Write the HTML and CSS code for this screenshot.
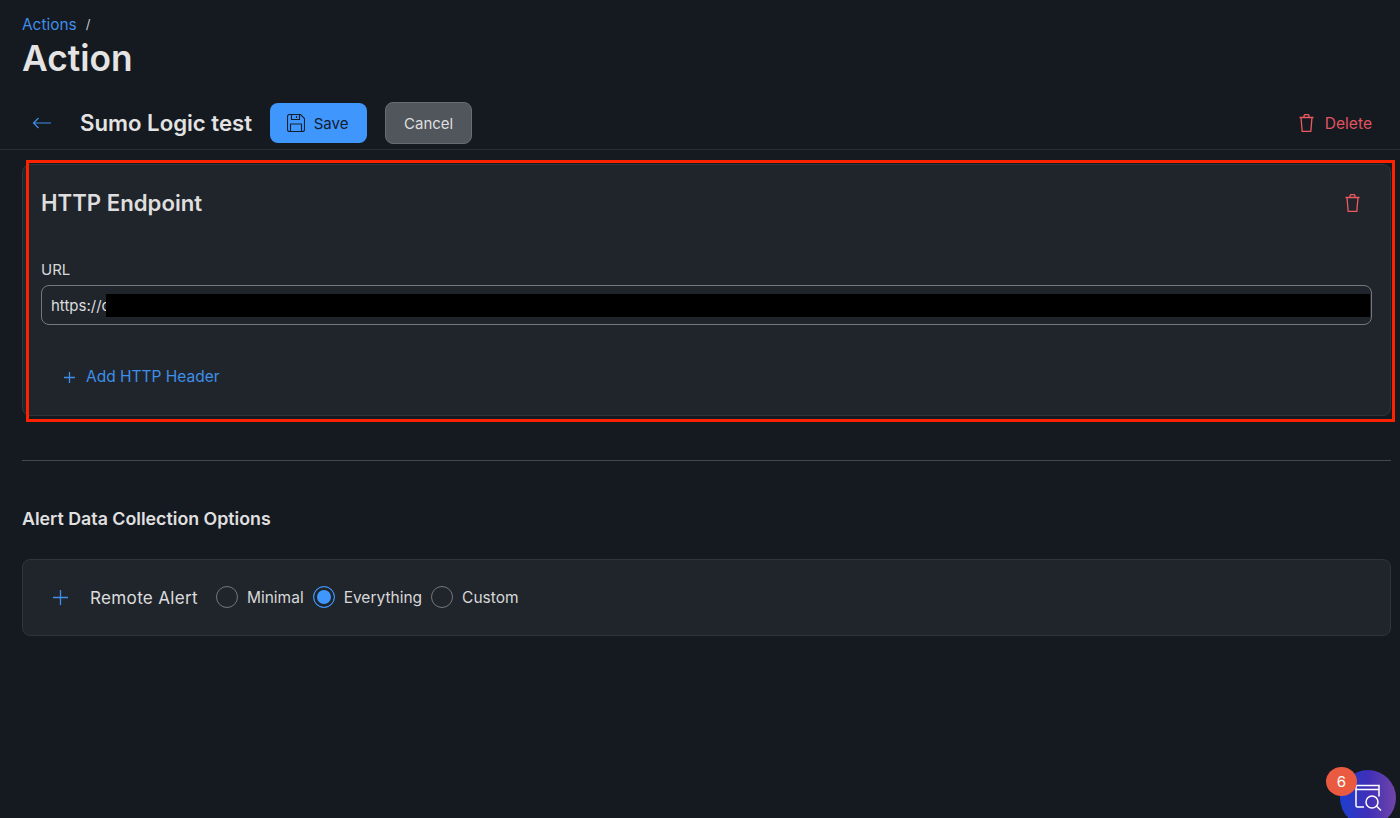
FILE: index.html
```html
<!DOCTYPE html>
<html lang="en">
<head>
<meta charset="utf-8">
<title>Action</title>
<link rel="stylesheet" href="styles.css">
</head>
<body>
<header class="page-head">
  <nav class="crumbs"><a class="crumb-link">Actions</a><span class="crumb-sep">/</span></nav>
  <h1 class="page-title">Action</h1>
</header>
<div class="toolbar">
  <svg class="back" width="20" height="12" viewBox="0 0 20 12" fill="none" stroke="currentColor" stroke-width="1.2"><path d="M19 6H1.500M6.500 1 1.500 6l5 5"/></svg>
  <h2 class="record-name">Sumo Logic test</h2>
  <button class="btn btn-save">
    <svg width="18" height="18" viewBox="0 0 18 18" fill="none" stroke="currentColor" stroke-width="1.100"><path d="M.5 2.500a2 2 0 0 1 2-2h11l4 4v11a2 2 0 0 1-2 2h-13a2 2 0 0 1-2-2z"/><path d="M4.500 .5v5h8v-5M9.500 2v2M3.500 17.500v-7.500h11v7.500"/></svg>
    Save
  </button>
  <button class="btn btn-cancel">Cancel</button>
  <button class="btn-delete">
    <svg class="trash" width="15" height="18" viewBox="0 0 15 18" fill="none" stroke="currentColor" stroke-width="1.300"><path d="M.5 3.500h14M2 3.500l1.200 14h8.600l1.200-14M5 3.500V2a1.500 1.500 0 0 1 1.500-1.500h2A1.500 1.500 0 0 1 10 2v1.500"/></svg>
    Delete
  </button>
</div>
<main class="content">
  <section class="card endpoint">
    <div class="card-head">
      <h3 class="card-title">HTTP Endpoint</h3>
      <svg class="trash" width="15" height="18" viewBox="0 0 15 18" fill="none" stroke="currentColor" stroke-width="1.300"><path d="M.5 3.500h14M2 3.500l1.200 14h8.600l1.200-14M5 3.500V2a1.500 1.500 0 0 1 1.500-1.500h2A1.500 1.500 0 0 1 10 2v1.500"/></svg>
    </div>
    <label class="field-label">URL</label>
    <div class="input"><span class="input-text">https://c</span><span class="redaction"></span></div>
    <a class="add-header">
      <svg width="11" height="11" viewBox="0 0 11 11" fill="none" stroke="currentColor" stroke-width="1.300"><path d="M5.500 0v11M0 5.500h11"/></svg>
      Add HTTP Header
    </a>
  </section>
  <hr class="divider">
  <h3 class="section-title">Alert Data Collection Options</h3>
  <section class="card alert-row">
    <svg class="plus" width="15" height="15" viewBox="0 0 15 15" fill="none" stroke="currentColor" stroke-width="1.300"><path d="M7.500 0v15M0 7.500h15"/></svg>
    <span class="alert-name">Remote Alert</span>
    <span class="radio"></span><span class="radio-label">Minimal</span>
    <span class="radio checked"></span><span class="radio-label">Everything</span>
    <span class="radio"></span><span class="radio-label">Custom</span>
  </section>
</main>
<div class="annotation"></div>
<div class="fab">
  <svg width="28" height="28" viewBox="0 0 28 28" fill="none" stroke="#fff" stroke-width="1.500"><path d="M10 23H3.500A1.500 1.500 0 0 1 2 21.500V1.500h23v11M2 5.500h23"/><circle cx="18" cy="18" r="6"/><path d="m22.500 22 4.500 4.500"/></svg>
</div>
<div class="badge">6</div>
</body>
</html>
```
FILE: styles.css
```css
* { box-sizing: border-box; }
html, body { height: 100%; }
body {
  margin: 0;
  height: 818px;
  overflow: hidden;
  position: relative;
  background: #151920;
  color: #e3e3e3;
  font-family: Inter, "Liberation Sans", sans-serif;
}
.page-head { padding: 15px 22px 0; height: 102px; }
.crumbs { display: flex; gap: 9px; font-size: 15.400px; line-height: 19px; }
.crumb-link { color: #3e8fe8; }
.crumb-sep { color: #c9c9c9; font-size: 13px; }
.page-title { margin: 4px 0 0; font-size: 35.300px; line-height: 42px; font-weight: 600; color: #e4e4e4; }
.toolbar {
  display: flex;
  align-items: center;
  height: 48px;
  padding: 0 28px 5px 32px;
  border-bottom: 1px solid #2a2e35;
}
.back { color: #3e8fe8; }
.record-name { margin: 0 18px 0 28px; padding-bottom: 2px; font-size: 22.200px; font-weight: 600; color: #e3e3e3; white-space: nowrap; }
.btn {
  display: flex;
  align-items: center;
  justify-content: center;
  font: 400 15px Inter, "Liberation Sans", sans-serif;
  border-radius: 8px;
}
.btn-save { width: 97px; height: 40px; gap: 9px; padding: 0 2px 0 0; background: #3f97fd; color: #14202e; border: 0; }
.btn-cancel { width: 87px; height: 42px; margin-left: 18px; padding: 0; background: #51555c; color: #dfdfdf; border: 1px solid #696d73; }
.btn-delete {
  margin-left: auto;
  display: flex;
  align-items: center;
  gap: 11px;
  padding: 0;
  background: none;
  border: 0;
  color: #e0535f;
  font: 400 15.600px Inter, "Liberation Sans", sans-serif;
}
.trash { color: #ee5a62; }
.content { padding: 14px 9px 0 22px; }
.card { background: #20252c; border: 1px solid #30353c; border-radius: 8px; }
.endpoint { height: 252px; padding: 0 18px; }
.card-head { display: flex; justify-content: space-between; align-items: center; height: 76px; padding-right: 12px; }
.card-title { margin: 0; padding-bottom: 2px; font-size: 22.200px; font-weight: 600; color: #dedede; }
.field-label { display: block; margin-top: 19px; font-size: 15px; line-height: 20px; color: #d8d8d8; }
.input {
  display: flex;
  align-items: center;
  height: 40px;
  margin-top: 5px;
  padding: 0 1px 0 9px;
  border: 1px solid #74787e;
  border-radius: 8px;
  font-size: 15px;
  color: #dcdcdc;
}
.input-text { flex: none; white-space: nowrap; }
.redaction { flex: 1; height: 23px; margin-left: -4px; background: #000; }
.add-header {
  display: flex;
  align-items: center;
  gap: 11px;
  margin: 42px 0 0 23px;
  font-size: 15.500px;
  line-height: 20px;
  color: #3e8fe8;
}
.divider { margin: 44px 0 0; border: 0; border-top: 1px solid #44474c; }
.section-title { margin: 47px 0 0; font-size: 17.800px; line-height: 22px; font-weight: 600; color: #e0e0e0; }
.alert-row { display: flex; align-items: center; height: 77px; margin-top: 29px; padding: 0 0 1px 30px; }
.plus { color: #3e8fe8; }
.alert-name { margin: 0 18px 0 22px; font-size: 17.100px; color: #dcdcdc; letter-spacing: .3px; }
.radio { width: 22px; height: 22px; border: 1px solid #74777b; border-radius: 50%; flex: none; }
.radio.checked { border-color: #3f97fd; background: #3f97fd; box-shadow: inset 0 0 0 3px #20252c; }
.radio-label { margin: 0 9px; font-size: 15.500px; color: #d8d8d8; }
.annotation {
  position: absolute;
  left: 26px;
  top: 160px;
  width: 1369px;
  height: 262px;
  border: 3px solid #fb2200;
  pointer-events: none;
}
.fab {
  position: absolute;
  left: 1340px;
  top: 770px;
  width: 56px;
  height: 56px;
  padding: 14px;
  border-radius: 50%;
  background: linear-gradient(90deg, #1c3fd0, #3f2fb8 50%, #7045a8);
}
.fab svg { display: block; }
.badge {
  position: absolute;
  left: 1326px;
  top: 767px;
  width: 31px;
  height: 29px;
  border-radius: 50%;
  background: #ea5a40;
  color: #fff;
  font-size: 15px;
  line-height: 29px;
  text-align: center;
}
```
